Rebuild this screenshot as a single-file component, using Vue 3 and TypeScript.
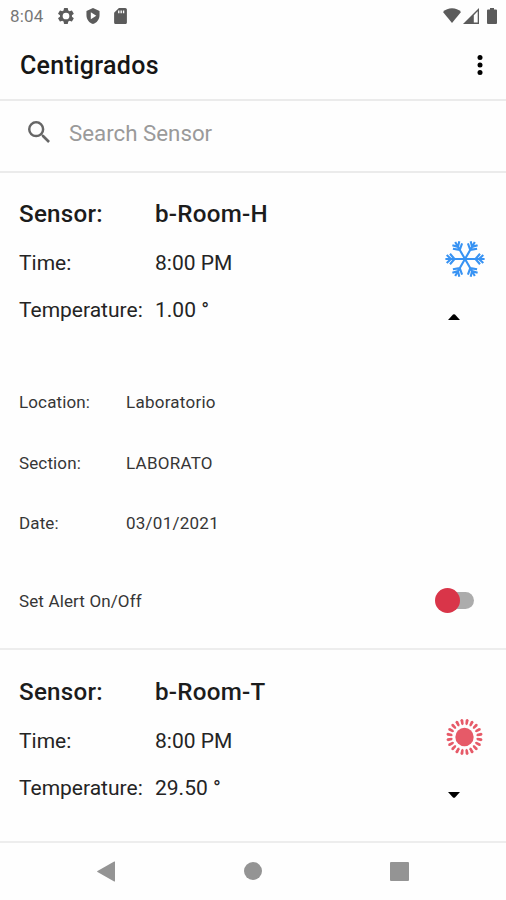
<script setup lang="ts">
import { ref } from 'vue'

interface Sensor {
  name: string
  time: string
  temperature: string
  kind: 'cold' | 'hot'
  open: boolean
  alert: boolean
  details: { label: string; value: string }[]
}

const query = ref('')

const sensors = ref<Sensor[]>([
  {
    name: 'b-Room-H',
    time: '8:00 PM',
    temperature: '1.00 °',
    kind: 'cold',
    open: true,
    alert: false,
    details: [
      { label: 'Location:', value: 'Laboratorio' },
      { label: 'Section:', value: 'LABORATO' },
      { label: 'Date:', value: '03/01/2021' },
    ],
  },
  {
    name: 'b-Room-T',
    time: '8:00 PM',
    temperature: '29.50 °',
    kind: 'hot',
    open: false,
    alert: false,
    details: [],
  },
])

const arms = [0, 60, 120, 180, 240, 300]
const rays = Array.from({ length: 20 }, (_, i) => i * 18 + 9)
</script>

<template>
  <div class="screen">
    <div class="status">
      <span class="clock">8:04</span>
      <svg class="s-gear" viewBox="2 2 20 20"><path fill-rule="evenodd" d="M19.4 13a7.5 7.5 0 0 0 0-2l2.1-1.6a.5.5 0 0 0 .1-.6l-2-3.500a.5.5 0 0 0-.6-.2l-2.500 1a7.300 7.300 0 0 0-1.700-1l-.4-2.600a.5.5 0 0 0-.5-.5h-4a.5.5 0 0 0-.5.5L9 5.100a7.300 7.300 0 0 0-1.700 1l-2.500-1a.5.5 0 0 0-.6.2l-2 3.500a.5.5 0 0 0 .1.600L4.500 11a7.500 7.500 0 0 0 0 2l-2.200 1.600a.5.5 0 0 0-.1.600l2 3.500c.1.200.4.300.6.200l2.500-1a7.300 7.300 0 0 0 1.700 1l.4 2.600c0 .3.200.5.500.5h4c.3 0 .5-.2.500-.5l.4-2.600a7.300 7.300 0 0 0 1.700-1l2.500 1c.2.100.5 0 .6-.2l2-3.500a.5.5 0 0 0-.1-.6zM12 16.200a4.200 4.200 0 1 1 0-8.400 4.200 4.200 0 0 1 0 8.400z" /></svg>
      <svg class="s-shield" viewBox="3 1 18 22"><path fill-rule="evenodd" d="M12 1 3 5v6c0 5.550 3.840 10.740 9 12 5.160-1.260 9-6.450 9-12V5zM9 7l7.500 4.700L9 16.500z" /></svg>
      <svg class="s-card" viewBox="4 2 16 20"><path fill-rule="evenodd" d="M18 2h-8L4.020 8 4 20c0 1.100.9 2 2 2h12c1.100 0 2-.9 2-2V4c0-1.100-.9-2-2-2zM9 5h1.700v3.500H9zm3 0h1.700v3.500H12zm3 0h1.700v3.500H15z" /></svg>
      <span class="spacer"></span>
      <svg class="s-wifi" viewBox="0 0 18 15"><path d="M9 15 0 4C2.500 1.600 5.500.3 9 .3s6.500 1.300 9 3.700z" /></svg>
      <svg class="s-signal" viewBox="0 0 16 16"><path fill-rule="evenodd" d="M16 0v16H0zM10.800 7.200V14.600H14.700V3.300z" /></svg>
      <svg class="s-battery" viewBox="0 0 10 16"><path d="M3 0h4v1.600h2a1 1 0 0 1 1 1V15a1 1 0 0 1-1 1H1a1 1 0 0 1-1-1V2.600a1 1 0 0 1 1-1h2z" /></svg>
    </div>

    <header class="bar">
      <h1 class="title">Centigrados</h1>
      <svg class="more" viewBox="0 0 6 22"><circle cx="3" cy="3.600" r="2.500" /><circle cx="3" cy="11" r="2.500" /><circle cx="3" cy="18.400" r="2.500" /></svg>
    </header>

    <div class="search">
      <svg class="lens" viewBox="3 3 17.500 17.500"><path d="M15.500 14h-.79l-.28-.27A6.470 6.470 0 0 0 16 9.500 6.500 6.500 0 1 0 9.500 16c1.610 0 3.090-.59 4.230-1.570l.27.28v.79l5 4.990L20.490 19l-4.990-5zm-6 0C7.010 14 5 11.990 5 9.500S7.010 5 9.500 5 14 7.010 14 9.500 11.990 14 9.500 14z" /></svg>
      <input v-model="query" class="field" placeholder="Search Sensor" />
    </div>

    <main class="list">
      <section v-for="s in sensors" :key="s.name" class="card">
        <div class="summary">
          <div class="rows">
            <div class="row name"><span class="key">Sensor:</span><span>{{ s.name }}</span></div>
            <div class="row time"><span class="key">Time:</span><span>{{ s.time }}</span></div>
            <div class="row temp"><span class="key">Temperature:</span><span>{{ s.temperature }}</span></div>
          </div>
          <div class="side">
            <svg v-if="s.kind === 'cold'" class="weather" viewBox="-21 -21 42 42">
              <g v-for="a in arms" :key="a" :transform="`rotate(${a})`" class="flake">
                <path d="M0 0H19.600M10.500 0l4.500-5.300M10.500 0l4.500 5.300M14 0l4.300-4M14 0l4.300 4" />
              </g>
            </svg>
            <svg v-else class="weather" viewBox="-20.500 -21 42 42">
              <circle class="sun" r="9.200" />
              <path v-for="a in rays" :key="a" class="ray" :transform="`rotate(${a})`" d="M11.800 0 13-1.200 17-1.500Q19.400 0 17 1.500L13 1.200Z" />
            </svg>
            <svg class="caret" :class="{ down: !s.open }" viewBox="0 0 12 6" @click="s.open = !s.open"><path d="M0 6 5 .6Q6-.2 7 .6L12 6z" /></svg>
          </div>
        </div>
        <div v-if="s.open" class="details">
          <div v-for="d in s.details" :key="d.label" class="detail"><span class="dkey">{{ d.label }}</span><span>{{ d.value }}</span></div>
          <div class="alert">
            <span class="alabel">Set Alert On/Off</span>
            <button class="switch" :class="{ on: s.alert }" @click="s.alert = !s.alert"><span class="track"></span><span class="thumb"></span></button>
          </div>
        </div>
      </section>
    </main>

    <nav class="nav">
      <svg class="n-back" viewBox="0 0 18 21"><path d="M18 1v19a.5.5 0 0 1-.8.400L.5 11a.6.600 0 0 1 0-1L17.200.6A.5.500 0 0 1 18 1z" /></svg>
      <span class="n-home"></span>
      <span class="n-recent"></span>
    </nav>
  </div>
</template>

<style>
body {
  margin: 0;
  background: #fefefe;
}
</style>

<style scoped>
.screen {
  display: flex;
  flex-direction: column;
  box-sizing: border-box;
  width: 506px;
  height: 900px;
  overflow: hidden;
  background: #fefefe;
  color: #242424;
  font-family: Roboto, sans-serif;
}
svg {
  display: block;
  flex: none;
}
.status {
  display: flex;
  align-items: center;
  height: 31px;
  padding: 0 9px 0 10px;
  box-sizing: border-box;
  fill: #5b5b5b;
}
.clock {
  width: 48px;
  font-size: 17px;
  letter-spacing: 0.2px;
  color: #777;
}
.s-gear { width: 16px; height: 16px; }
.s-shield { width: 14px; height: 16px; margin-left: 12px; }
.s-card { width: 13px; height: 16px; margin-left: 14px; }
.spacer { flex: 1; }
.s-wifi { width: 18px; height: 15px; }
.s-signal { width: 16px; height: 16px; margin-left: 2px; }
.s-battery { width: 10px; height: 16px; margin-left: 8px; }
.bar {
  display: flex;
  align-items: center;
  justify-content: space-between;
  height: 68px;
  padding: 0 23px 0 20px;
  border-bottom: 2px solid #ebebeb;
}
.title {
  margin: 0;
  font-size: 25px;
  font-weight: 500;
  letter-spacing: 0.300px;
  color: #161616;
}
.more {
  width: 6px;
  height: 22px;
  margin-top: -1px;
  fill: #000;
}
.search {
  display: flex;
  align-items: center;
  height: 70px;
  padding: 0 28px;
  border-bottom: 2px solid #ebebeb;
}
.lens {
  width: 22px;
  height: 22px;
  margin-top: -9px;
  fill: #666;
}
.field {
  flex: 1;
  height: 40px;
  margin: -7px 0 0 19px;
  padding: 0;
  border: 0;
  outline: 0;
  background: transparent;
  font-family: inherit;
  font-size: 22.300px;
}
.field::placeholder {
  color: #9a9a9a;
}
.card {
  border-bottom: 2px solid #ededed;
}
.summary {
  display: flex;
  justify-content: space-between;
  height: 191px;
  padding: 0 20px 0 19px;
  box-sizing: border-box;
}
.card + .card .rows { padding-top: 17px; }
.card + .card .side { padding-top: 66px; }
.rows {
  padding-top: 16px;
}
.row {
  display: flex;
  align-items: center;
  height: 48px;
  font-size: 21px;
}
.row.name {
  height: 50px;
  font-size: 24.200px;
  font-weight: 500;
  letter-spacing: 0.250px;
  color: #1c1c1c;
}
.row.temp { height: 46px; }
.key { width: 136px; }
.side {
  display: flex;
  flex-direction: column;
  width: 42px;
  padding-top: 65px;
}
.weather {
  width: 42px;
  height: 42px;
}
.flake {
  fill: none;
  stroke: #3893f3;
  stroke-width: 2.100;
}
.sun,
.ray { fill: #e65a68; }
.caret {
  width: 12px;
  height: 6px;
  margin: 34px 0 0 4px;
  fill: #000;
}
.caret.down { transform: rotate(180deg); }
.details {
  height: 284px;
  padding: 8px 19px 0;
  box-sizing: border-box;
  font-size: 17px;
  letter-spacing: 0.250px;
  color: #363636;
}
.detail {
  display: flex;
  align-items: center;
  height: 60.500px;
}
.dkey {
  width: 107px;
  letter-spacing: 0.130px;
}
.alabel { letter-spacing: 0.130px; }
.alert {
  display: flex;
  align-items: center;
  justify-content: space-between;
  height: 94px;
}
.switch {
  display: flex;
  align-items: center;
  width: 40px;
  height: 26px;
  margin-right: 12px;
  padding: 0;
  border: 0;
  background: none;
}
.thumb {
  order: -1;
  flex: none;
  width: 25px;
  height: 25px;
  border-radius: 50%;
  background: #d93549;
  z-index: 1;
}
.track {
  flex: none;
  width: 30px;
  height: 17px;
  margin-left: -16px;
  border-radius: 9px;
  background: #acacac;
}
.switch.on { flex-direction: row-reverse; }
.list {
  flex: none;
  height: 670px;
  overflow: hidden;
}
.nav {
  display: flex;
  align-items: center;
  justify-content: space-between;
  box-sizing: border-box;
  height: 57px;
  padding: 0 97px 1px;
}
.n-back {
  width: 18px;
  height: 21px;
  fill: #949494;
}
.n-home {
  width: 18px;
  height: 18px;
  border-radius: 50%;
  background: #949494;
}
.n-recent {
  width: 19px;
  height: 19px;
  border-radius: 1px;
  background: #949494;
}
</style>
